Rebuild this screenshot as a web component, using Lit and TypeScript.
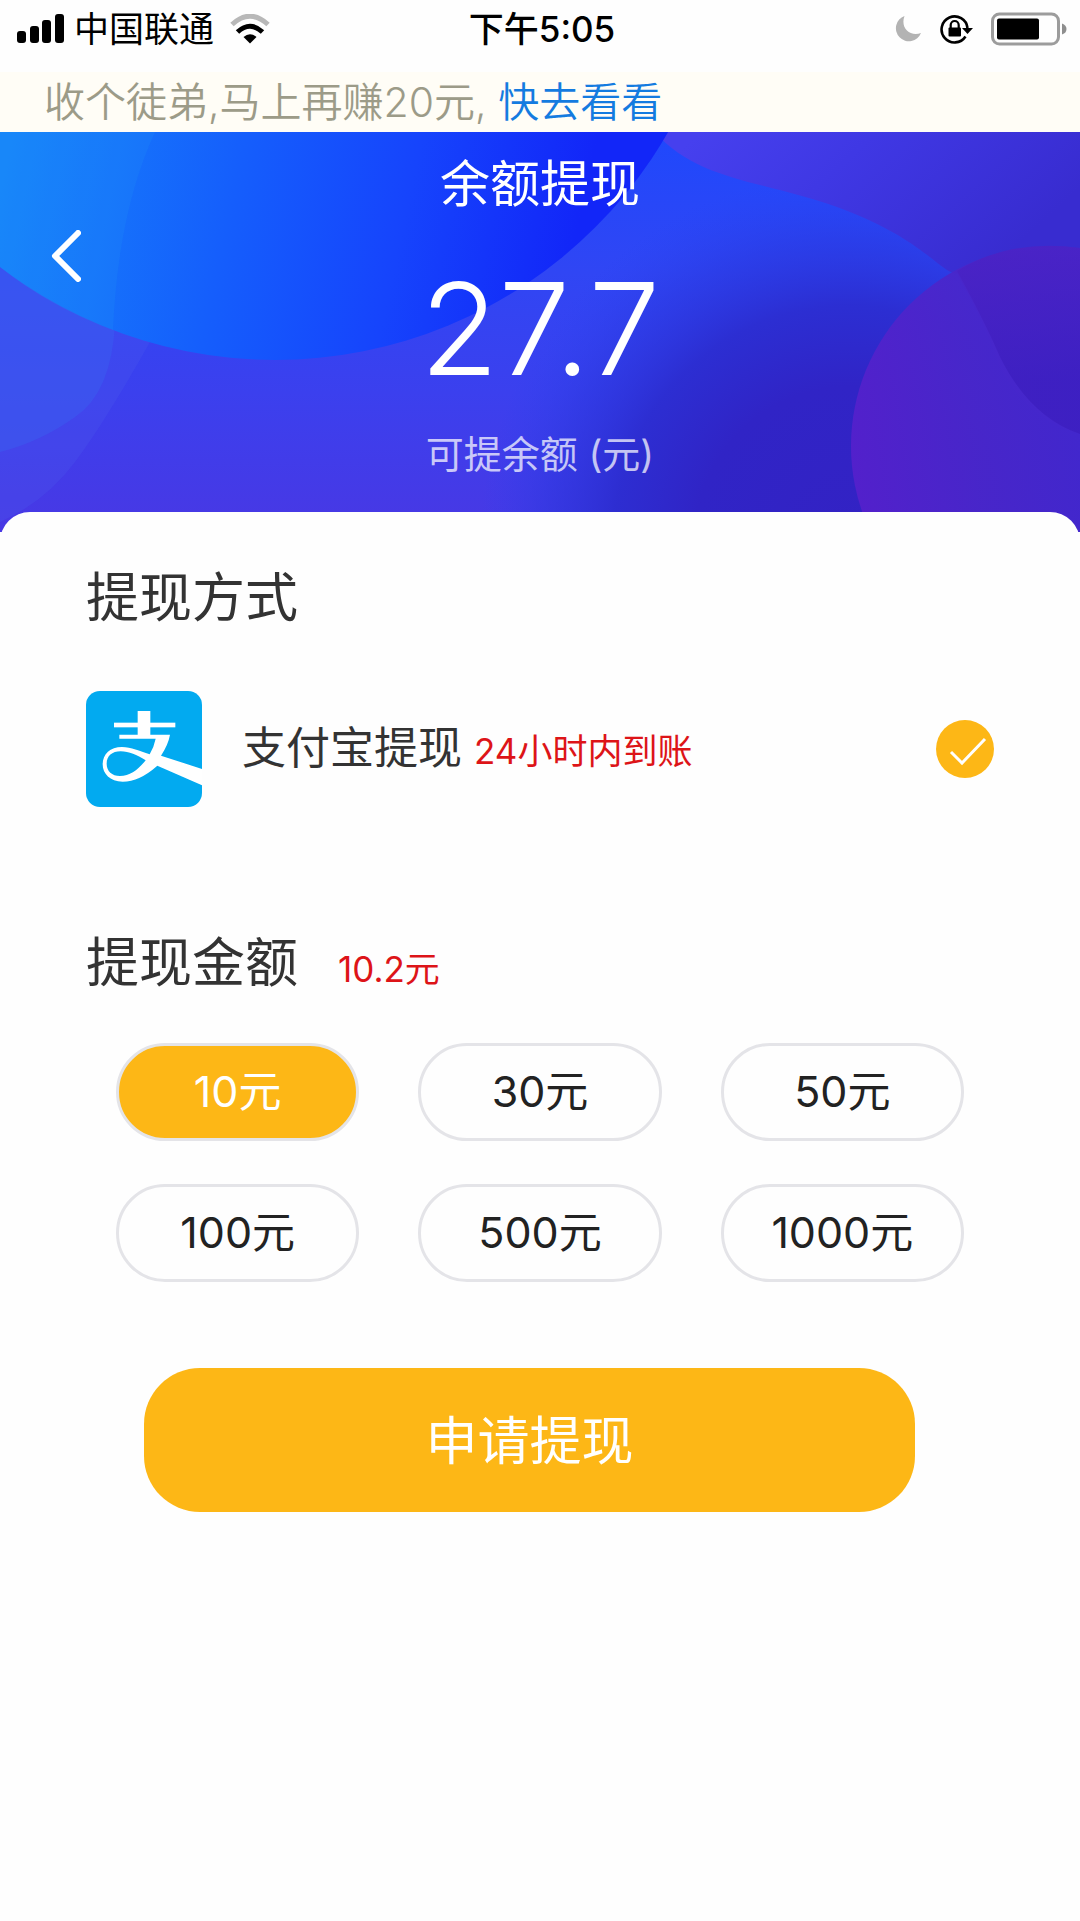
import { LitElement, html, css, svg } from "lit";
import { customElement, state } from "lit/decorators.js";
import { classMap } from "lit/directives/class-map.js";

const AMOUNTS = [10, 30, 50, 100, 500, 1000];

@customElement("status-bar")
class StatusBar extends LitElement {
  static styles = css`
    :host {
      display: grid;
      grid-template-columns: 1fr auto 1fr;
      align-items: center;
      height: 58px;
      padding: 0 13px 14px 17px;
      color: #000;
      font-size: 35px;
      line-height: 40px;
    }
    .side {
      display: flex;
      align-items: center;
    }
    .signal {
      margin-right: 10px;
    }
    .wifi {
      margin-left: 16px;
    }
    .time {
      font-weight: 500;
    }
    .end {
      justify-content: flex-end;
      gap: 18px;
    }
    svg {
      display: block;
      flex: none;
    }
  `;

  render() {
    return html`
      <div class="side">
        <svg class="signal" width="47" height="30" viewBox="0 0 47 30" aria-hidden="true">
          <rect x="0" y="17" width="9" height="12" rx="3" />
          <rect x="13" y="12" width="9" height="17" rx="3" />
          <rect x="25" y="6" width="9" height="23" rx="3" />
          <rect x="38" y="0" width="9" height="29" rx="3" />
        </svg>
        <span>中国联通</span>
        <svg class="wifi" width="40" height="30" viewBox="0 0 40 30" aria-hidden="true">
          <path d="M2 10.500Q20-6 38 10.500" fill="none" stroke="#b8b8b8" stroke-width="5" />
          <path d="M7.500 18Q20 6.500 32.500 18" fill="none" stroke="#000" stroke-width="5" />
          <path d="M13.500 23Q20 17.500 26.500 23L20 29.500Z" />
        </svg>
      </div>
      <span class="time">下午5:05</span>
      <div class="side end">
        <svg width="27" height="28" viewBox="0 0 27 28" aria-hidden="true">
          <path d="M9.500 1A13 13 0 1 0 26 18C15 22 5 13 9.500 1Z" fill="#b3b3b3" />
        </svg>
        <svg width="33" height="30" viewBox="0 0 33 30" aria-hidden="true">
          <path d="M25.500 22.500A13 13 0 1 1 27.500 14" fill="none" stroke="#000" stroke-width="2.600" />
          <path d="M22 14H33L27.500 20Z" />
          <rect x="8.500" y="13.500" width="12.500" height="9" rx="1" />
          <path d="M10.700 14V11a4 4 0 0 1 8 0V14" fill="none" stroke="#000" stroke-width="2.200" />
        </svg>
        <svg width="76" height="34" viewBox="0 0 76 34" aria-hidden="true">
          <rect x="1.500" y="2" width="66" height="30" rx="7" fill="none" stroke="#9c9c9c" stroke-width="3" />
          <rect x="6" y="6.500" width="42" height="21" rx="2" />
          <path d="M71 11.500Q75.500 13 75.500 17T71 22.500Z" fill="#8e8e8e" />
        </svg>
      </div>
    `;
  }
}

@customElement("balance-header")
class BalanceHeader extends LitElement {
  static styles = css`
    :host {
      display: grid;
      grid-template-columns: 1fr auto 1fr;
      position: relative;
      height: 400px;
      overflow: hidden;
      color: #fff;
      background: #3a35e0;
    }
    .art {
      position: absolute;
      inset: 0;
      width: 100%;
      height: 100%;
    }
    .back {
      position: relative;
      justify-self: start;
      align-self: start;
      margin: 86px 0 0 39px;
      padding: 12px;
      border: 0;
      background: none;
      color: inherit;
      cursor: pointer;
    }
    .back svg {
      display: block;
    }
    .info {
      position: relative;
      display: flex;
      flex-direction: column;
      align-items: center;
      padding-top: 27px;
    }
    h1 {
      margin: 0;
      font-size: 50px;
      line-height: 50px;
      font-weight: 400;
    }
    .value {
      margin-top: 56px;
      font-size: 128px;
      line-height: 128px;
      font-weight: 350;
    }
    .caption {
      margin-top: 42px;
      font-size: 38px;
      line-height: 38px;
      color: rgba(255, 255, 255, 0.72);
    }
  `;

  private art() {
    return svg`
      <defs>
        <linearGradient id="base" x1="0" y1="0" x2="0" y2="1">
          <stop offset="0" stop-color="#1f48fc" />
          <stop offset="0.350" stop-color="#3046f4" />
          <stop offset="0.650" stop-color="#3b40ee" />
          <stop offset="1" stop-color="#4838e4" />
        </linearGradient>
        <radialGradient id="deep" gradientUnits="userSpaceOnUse" cx="850" cy="410" r="370">
          <stop offset="0" stop-color="#3322c4" />
          <stop offset="0.420" stop-color="#3024c6" />
          <stop offset="0.640" stop-color="#2b2ccf" stop-opacity="0.900" />
          <stop offset="0.820" stop-color="#2836de" stop-opacity="0.480" />
          <stop offset="1" stop-color="#2842f0" stop-opacity="0" />
        </radialGradient>
        <linearGradient id="corner" gradientUnits="userSpaceOnUse" x1="700" y1="0" x2="900" y2="220">
          <stop offset="0" stop-color="#4640ee" />
          <stop offset="0.400" stop-color="#3f38e4" />
          <stop offset="1" stop-color="#382cd0" />
        </linearGradient>
        <linearGradient id="disc" gradientUnits="userSpaceOnUse" x1="0" y1="60" x2="560" y2="180">
          <stop offset="0" stop-color="#1684fa" />
          <stop offset="0.400" stop-color="#155efc" />
          <stop offset="0.700" stop-color="#1644fc" />
          <stop offset="1" stop-color="#1226f8" />
        </linearGradient>
        <linearGradient id="plum" gradientUnits="userSpaceOnUse" x1="850" y1="330" x2="1080" y2="300">
          <stop offset="0" stop-color="#5620cc" />
          <stop offset="0.550" stop-color="#4a26ca" />
          <stop offset="1" stop-color="#4426cc" />
        </linearGradient>
        <linearGradient id="shade" x1="0" y1="0" x2="0" y2="1">
          <stop offset="0" stop-color="#4c22c4" />
          <stop offset="0.700" stop-color="#3b1dbe" />
          <stop offset="1" stop-color="#3b1dbe" />
        </linearGradient>
      </defs>
      <rect width="1080" height="400" fill="url(#base)" />
      <rect width="1080" height="400" fill="url(#deep)" />
      <path d="M0 0H300Q200 80 150 210Q105 290 75 330Q45 370 0 390Z" fill="#4a58ec" fill-opacity="0.280" />
      <path d="M0 0H160Q115 90 115 190Q112 260 75 285Q40 310 0 320Z" fill="#3a62f0" fill-opacity="0.420" />
      <path d="M655 0C700 52 770 48 850 80C925 110 940 140 957 142Q985 190 1000 235Q1030 290 1080 302V0Z" fill="url(#corner)" />
      <circle cx="275" cy="-225" r="453" fill="url(#disc)" />
      <path d="M0 0H155Q118 80 113 198Q50 175 0 135Z" fill="#2090f8" fill-opacity="0.220" />
      <circle cx="1051" cy="314" r="200" fill="url(#plum)" fill-opacity="0.900" />
      <path d="M957 139Q985 190 1000 225Q1030 285 1080 302V116Q1010 106 957 139Z" fill="url(#shade)" fill-opacity="0.700" />
    `;
  }

  render() {
    return html`
      <svg class="art" viewBox="0 0 1080 400" preserveAspectRatio="none" aria-hidden="true">${this.art()}</svg>
      <button class="back" type="button" aria-label="返回">
        <svg width="30" height="52" viewBox="0 0 30 52" aria-hidden="true">
          <path d="M27 3L4 26L27 49" fill="none" stroke="#fff" stroke-width="6" stroke-linecap="round" stroke-linejoin="round" />
        </svg>
      </button>
      <div class="info">
        <h1>余额提现</h1>
        <div class="value">27.7</div>
        <div class="caption">可提余额 (元)</div>
      </div>
    `;
  }
}

@customElement("app-root")
class AppRoot extends LitElement {
  static styles = css`
    :host {
      display: block;
      min-height: 100vh;
      background: #fefefe;
      color: #333;
      font-family: Inter, "Noto Sans CJK SC", sans-serif;
    }
    .banner {
      margin: 0;
      padding: 0 44px;
      background: #fffdf6;
      color: #9c9b88;
      font-size: 41px;
      line-height: 60px;
      font-weight: 350;
    }
    .banner a {
      color: #147be0;
      text-decoration: none;
    }
    .card {
      position: relative;
      margin-top: -20px;
      padding: 56px 86px 0;
      border-radius: 30px 30px 0 0;
      background: #fefefe;
    }
    h2 {
      margin: 0;
      font-size: 53px;
      line-height: 60px;
      font-weight: 400;
    }
    .note {
      color: #dd1418;
      font-size: 35px;
    }
    .method {
      position: relative;
      display: flex;
      align-items: center;
      margin-top: 63px;
      cursor: pointer;
    }
    .method svg {
      display: block;
      flex: none;
    }
    .label {
      display: flex;
      flex: 1;
      align-items: baseline;
      gap: 12px;
      margin-left: 40px;
      font-size: 44px;
      line-height: 60px;
    }
    .amount-head {
      display: flex;
      align-items: baseline;
      gap: 40px;
      margin-top: 126px;
    }
    .amounts {
      display: grid;
      grid-template-columns: repeat(3, 1fr);
      gap: 43px 59px;
      margin: 50px 30px 0;
      padding: 0;
      border: 0;
    }
    .pill {
      position: relative;
      box-sizing: border-box;
      height: 98px;
      border: 3px solid #e4e4e8;
      border-radius: 49px;
      color: #222;
      font-size: 43px;
      line-height: 90px;
      text-align: center;
      cursor: pointer;
    }
    .pill.on {
      background: #fdb716;
      color: #fff;
    }
    .choice {
      position: absolute;
      inset: 0;
      width: 100%;
      height: 100%;
      margin: 0;
      opacity: 0;
      cursor: pointer;
    }
    .submit {
      display: block;
      width: calc(100% - 137px);
      height: 144px;
      margin: 86px 79px 0 58px;
      padding: 0 0 6px;
      border: 0;
      border-radius: 56px;
      background: #fdb716;
      color: #fff;
      font-family: inherit;
      font-size: 52px;
      cursor: pointer;
    }
  `;

  @state() private amount = 10;

  render() {
    return html`
      <status-bar></status-bar>
      <p class="banner">收个徒弟,马上再赚20元, <a href="#invite">快去看看</a></p>
      <balance-header></balance-header>
      <main class="card">
        <h2>提现方式</h2>
        <label class="method">
          <svg width="116" height="116" viewBox="0 0 348 348" aria-hidden="true">
            <rect width="348" height="348" rx="42" fill="#02aaf0" />
            <g fill="#fff">
              <rect x="155" y="60" width="38" height="76" />
              <rect x="84" y="95" width="184" height="14" />
              <path d="M100 131H252Q247 160 225 194L348 234V283L214 224Q160 272 110 272C72 272 50 248 50 220C50 190 72 168 108 168C136 168 160 180 191 190Q204 168 209 143H100ZM179 208C152 192 130 181 104 181C78 181 62 195 62 218C62 240 78 255 102 255C132 255 156 236 179 208Z" fill-rule="evenodd" />
            </g>
          </svg>
          <span class="label">支付宝提现<span class="note">24小时内到账</span></span>
          <svg width="58" height="58" viewBox="0 0 58 58" aria-hidden="true">
            <circle cx="29" cy="29" r="29" fill="#fdb716" />
            <path d="M15 32L26 43L49 19" fill="none" stroke="#fff" stroke-width="3" />
          </svg>
          <input class="choice" type="radio" name="method" value="alipay" checked />
        </label>
        <div class="amount-head">
          <h2>提现金额</h2>
          <span class="note">10.2元</span>
        </div>
        <fieldset class="amounts" aria-label="提现金额">
          ${AMOUNTS.map(
            (n) => html`
              <label class=${classMap({ pill: true, on: n === this.amount })}>
                <input
                  class="choice"
                  type="radio"
                  name="amount"
                  .value=${String(n)}
                  .checked=${n === this.amount}
                  @change=${() => (this.amount = n)}
                />${n}元
              </label>
            `
          )}
        </fieldset>
        <button class="submit" type="button">申请提现</button>
      </main>
    `;
  }
}
